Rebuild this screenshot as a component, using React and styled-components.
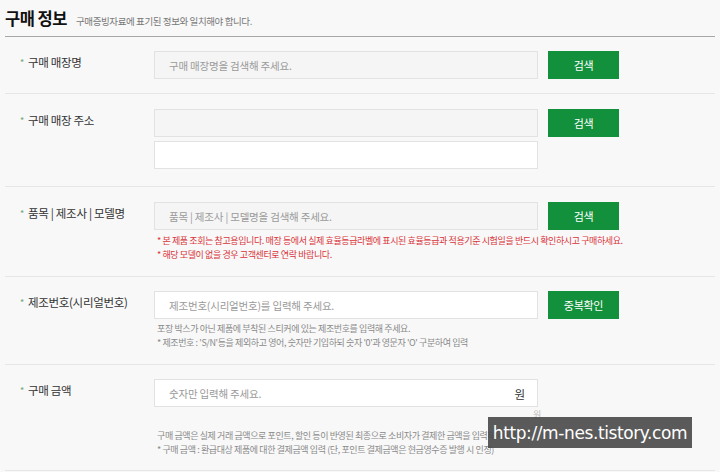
import React from "react";
import styled, { createGlobalStyle } from "styled-components";

const Global = createGlobalStyle`
  html, body { margin: 0; padding: 0; background: #f8f8f8; }
  body { font-family: "Noto Sans CJK KR", "Noto Sans", sans-serif; color: #333; }
  * { box-sizing: border-box; }
`;

const Page = styled.div`
  position: relative;
  width: 720px;
  height: 472px;
  overflow: hidden;
  padding: 0 5px;
  background: #f8f8f8;
`;

const TitleBar = styled.div`
  display: flex;
  align-items: baseline;
  gap: 9px;
  height: 37px;
  padding-top: 6px;
  border-bottom: 1px solid #a8a8a8;
`;

const Title = styled.h2`
  margin: 0;
  font-size: 16.5px;
  font-weight: 700;
  letter-spacing: -0.5px;
  color: #111;
`;

const Subtitle = styled.span`
  font-size: 9.5px;
  color: #777;
  letter-spacing: -0.4px;
`;

const Row = styled.div`
  display: flex;
  padding: ${(p) => p.$pad || "14px 0 14px"};
  border-bottom: 1px solid #e6e6e6;
  min-height: ${(p) => p.$h || 0}px;
`;

const Label = styled.div`
  width: 149px;
  padding: 3px 0 0 15px;
  font-size: 11.5px;
  color: #333;
  letter-spacing: -0.3px;
  &::before {
    content: "*";
    color: #6aa66f;
    font-size: 9px;
    margin-right: 4px;
    position: relative;
    top: -1px;
  }
`;

const Field = styled.div`
  display: flex;
  flex-direction: column;
`;

const Line = styled.div`
  display: flex;
  gap: 10px;
  align-items: flex-start;
`;

const InputBox = styled.div`
  position: relative;
  width: 384px;
  height: 28px;
  margin-bottom: ${(p) => p.$mb || 0}px;
  border: 1px solid #e2e2e2;
  background: ${(p) => (p.$gray ? "#f5f5f5" : "#fff")};
  display: flex;
  align-items: center;
  padding: 0 14px;
  font-size: 10.5px;
  color: #9a9a9a;
  letter-spacing: -0.2px;
`;

const Unit = styled.span`
  position: absolute;
  right: 12px;
  top: 6px;
  font-size: 11.5px;
  color: #333;
`;

const Button = styled.button`
  width: 71px;
  height: 28px;
  border: none;
  background: #13903b;
  color: #fff;
  font-family: inherit;
  font-size: 11px;
  letter-spacing: -0.3px;
  padding: 0;
  cursor: pointer;
`;

const Notes = styled.div`
  margin-top: ${(p) => p.$mt || 4}px;
  padding-left: 3px;
  display: flex;
  flex-direction: column;
`;

const Note = styled.div`
  font-size: 9px;
  line-height: 13.5px;
  letter-spacing: -0.4px;
  white-space: nowrap;
  color: ${(p) => (p.$red ? "#d8343a" : "#8a8a8a")};
`;

const Tiny = styled.div`
  padding-left: 379px;
  margin-top: 1px;
  font-size: 9px;
  color: #bbb;
  height: 12px;
`;

const Watermark = styled.div`
  position: absolute;
  left: 488px;
  top: 417px;
  width: 204px;
  height: 31px;
  background: rgba(72, 72, 72, 0.9);
  color: #fff;
  font-family: "DejaVu Sans", sans-serif;
  font-size: 17px;
  white-space: nowrap;
  display: flex;
  align-items: center;
  justify-content: center;
  letter-spacing: -0.4px;
`;

export default function App() {
  return (
    <Page>
      <Global />
      <TitleBar>
        <Title>구매 정보</Title>
        <Subtitle>구매증빙자료에 표기된 정보와 일치해야 합니다.</Subtitle>
      </TitleBar>

      <Row $pad="14px 0 14px">
        <Label>구매 매장명</Label>
        <Field>
          <Line>
            <InputBox $gray>구매 매장명을 검색해 주세요.</InputBox>
            <Button>검색</Button>
          </Line>
        </Field>
      </Row>

      <Row $pad="15px 0 17px">
        <Label>구매 매장 주소</Label>
        <Field>
          <Line>
            <InputBox $gray $mb={4} />
            <Button>검색</Button>
          </Line>
          <Line>
            <InputBox />
          </Line>
        </Field>
      </Row>

      <Row $pad="15px 0 15px">
        <Label>품목 | 제조사 | 모델명</Label>
        <Field>
          <Line>
            <InputBox $gray>품목 | 제조사 | 모델명을 검색해 주세요.</InputBox>
            <Button>검색</Button>
          </Line>
          <Notes $mt={4}>
            <Note $red>* 본 제품 조회는 참고용입니다. 매장 등에서 실제 효율등급라벨에 표시된 효율등급과 적용기준 시험일을 반드시 확인하시고 구매하세요.</Note>
            <Note $red>* 해당 모델이 없을 경우 고객센터로 연락 바랍니다.</Note>
          </Notes>
        </Field>
      </Row>

      <Row $pad="14px 0 14px" $h={88}>
        <Label>제조번호(시리얼번호)</Label>
        <Field>
          <Line>
            <InputBox>제조번호(시리얼번호)를 입력해 주세요.</InputBox>
            <Button>중복확인</Button>
          </Line>
          <Notes $mt={3}>
            <Note>포장 박스가 아닌 제품에 부착된 스티커에 있는 제조번호를 입력해 주세요.</Note>
            <Note>* 제조번호 : 'S/N'등을 제외하고 영어, 숫자만 기입하되 숫자 '0'과 영문자 'O' 구분하여 입력</Note>
          </Notes>
        </Field>
      </Row>

      <Row $pad="14px 0 14px">
        <Label>구매 금액</Label>
        <Field>
          <InputBox>
            숫자만 입력해 주세요.
            <Unit>원</Unit>
          </InputBox>
          <Tiny>원</Tiny>
          <Notes $mt={9}>
            <Note>구매 금액은 실제 거래 금액으로 포인트, 할인 등이 반영된 최종으로 소비자가 결제한 금액을 입력해 주세요.</Note>
            <Note>* 구매 금액 : 환급대상 제품에 대한 결제금액 입력 (단, 포인트 결제금액은 현금영수증 발행 시 인정)</Note>
          </Notes>
        </Field>
      </Row>

      <Watermark>http://m-nes.tistory.com</Watermark>
    </Page>
  );
}
